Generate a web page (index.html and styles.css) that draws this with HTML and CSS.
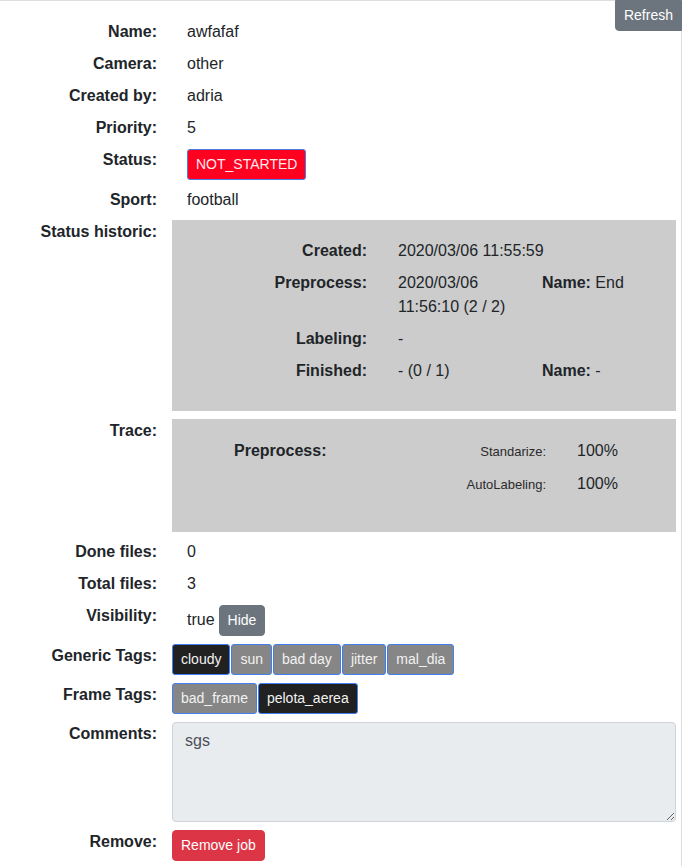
FILE: index.html
```html
<!DOCTYPE html>
<html>
<head>
<meta charset="utf-8">
<link rel="stylesheet" href="styles.css">
</head>
<body>
<div class="panel">
  <button class="btn btn-refresh">Refresh</button>

  <div class="row"><div class="label">Name:</div><div class="value text">awfafaf</div></div>
  <div class="row"><div class="label">Camera:</div><div class="value text">other</div></div>
  <div class="row"><div class="label">Created by:</div><div class="value text">adria</div></div>
  <div class="row"><div class="label">Priority:</div><div class="value text">5</div></div>
  <div class="row"><div class="label">Status:</div><div class="value text"><button class="btn btn-status offset">NOT_STARTED</button></div></div>
  <div class="row"><div class="label">Sport:</div><div class="value text">football</div></div>

  <div class="row">
    <div class="label">Status historic:</div>
    <div class="value">
      <div class="greybox history">
        <div class="hrow"><div class="hlabel">Created:</div><div class="hval wide">2020/03/06 11:55:59</div></div>
        <div class="hrow"><div class="hlabel">Preprocess:</div><div class="hval">2020/03/06 11:56:10 (2 / 2)</div><div class="hname"><b>Name:</b> End</div></div>
        <div class="hrow"><div class="hlabel">Labeling:</div><div class="hval wide">-</div></div>
        <div class="hrow"><div class="hlabel">Finished:</div><div class="hval">- (0 / 1)</div><div class="hname"><b>Name:</b> -</div></div>
      </div>
    </div>
  </div>

  <div class="row">
    <div class="label">Trace:</div>
    <div class="value">
      <div class="greybox trace">
        <div class="stage">Preprocess:</div>
        <div class="steps">
          <div class="step"><div class="slabel">Standarize:</div><div class="sval">100%</div></div>
          <div class="step"><div class="slabel">AutoLabeling:</div><div class="sval">100%</div></div>
        </div>
      </div>
    </div>
  </div>

  <div class="row"><div class="label">Done files:</div><div class="value text">0</div></div>
  <div class="row"><div class="label">Total files:</div><div class="value text">3</div></div>
  <div class="row"><div class="label">Visibility:</div><div class="value text vis"><span class="true">true</span> <button class="btn btn-hide offset">Hide</button></div></div>

  <div class="row">
    <div class="label">Generic Tags:</div>
    <div class="value tags">
      <button class="btn tag dark">cloudy</button>
      <button class="btn tag grey">sun</button>
      <button class="btn tag grey">bad day</button>
      <button class="btn tag grey">jitter</button>
      <button class="btn tag grey">mal_dia</button>
    </div>
  </div>

  <div class="row">
    <div class="label">Frame Tags:</div>
    <div class="value tags">
      <button class="btn tag grey">bad_frame</button>
      <button class="btn tag dark">pelota_aerea</button>
    </div>
  </div>

  <div class="row">
    <div class="label">Comments:</div>
    <div class="value"><textarea class="comments" readonly>sgs</textarea></div>
  </div>

  <div class="row">
    <div class="label">Remove:</div>
    <div class="value"><button class="btn btn-remove">Remove job</button></div>
  </div>
</div>
</body>
</html>
```

FILE: styles.css
```css
html, body {
  margin: 0;
  padding: 0;
  background: #ffffff;
}

body {
  font-family: "Liberation Sans", Arial, sans-serif;
  font-size: 16px;
  line-height: 24px;
  color: #212529;
}

.panel {
  position: relative;
  width: 681px;
  border-top: 1px solid #dedede;
  border-right: 1px solid #dedede;
  padding-top: 19px;
  min-height: 846px;
}

.row {
  display: flex;
  margin-bottom: 8px;
}

.label {
  flex: none;
  width: 157px;
  margin-right: 15px;
  text-align: right;
  font-weight: bold;
  line-height: 24px;
}

.value {
  flex: 1;
  min-width: 0;
  margin-right: 5px;
}

.value.text {
  padding-left: 15px;
}

.btn {
  display: inline-block;
  font-family: "Liberation Sans", Arial, sans-serif;
  font-size: 14px;
  line-height: 21px;
  padding: 4px 8px;
  border: 1px solid transparent;
  border-radius: 3px;
  color: #ffffff;
  cursor: pointer;
  vertical-align: top;
}

.offset {
  margin-top: 1px;
}

.btn-refresh {
  position: absolute;
  top: -1px;
  right: -1px;
  background: #6c757d;
  border-color: #6c757d;
  border-radius: 0 0 0 4px;
}

.btn-status {
  background: #ff0020;
  border-color: #4b7be6;
  color: #fde8ec;
}

.vis {
  display: flex;
  align-items: flex-start;
  gap: 4px;
}

.vis .true {
  margin-top: 4px;
}

.btn-hide {
  background: #6c757d;
  border-color: #6c757d;
  border-radius: 4px;
}

.greybox {
  background: #cccccc;
}

.history {
  padding: 19px 0 20px;
}

.hrow {
  display: flex;
  margin-bottom: 8px;
}

.hlabel {
  flex: none;
  width: 195px;
  margin-right: 31px;
  text-align: right;
  font-weight: bold;
}

.hval {
  flex: 0 0 144px;
}

.hval.wide {
  flex: 1;
}

.hname {
  flex: 1;
}

.trace {
  display: flex;
  padding: 20px 0 27px 62px;
}

.stage {
  flex: none;
  width: 212px;
  font-weight: bold;
}

.step {
  display: flex;
  align-items: baseline;
  margin-bottom: 8px;
}

.slabel {
  width: 100px;
  margin-right: 31px;
  text-align: right;
  font-size: 13px;
  color: #2b2b2b;
}

.sval {
  font-size: 16px;
}

.tags {
  display: flex;
  gap: 1px;
}

.tag {
  border-color: #3f7ff0;
  border-radius: 3px;
}

.tag.dark {
  background: #212121;
  color: #f2f2f2;
}

.tag.grey {
  background: #868686;
  color: #f2f2f2;
}

.comments {
  display: block;
  box-sizing: border-box;
  width: 100%;
  height: 100px;
  margin: 0;
  padding: 6px 12px;
  font-family: "Liberation Sans", Arial, sans-serif;
  font-size: 16px;
  line-height: 24px;
  color: #495057;
  background: #e9ecef;
  border: 1px solid #ced4da;
  border-radius: 4px;
  outline: none;
}

.btn-remove {
  background: #dc3545;
  border-color: #dc3545;
  border-radius: 4px;
}
```
